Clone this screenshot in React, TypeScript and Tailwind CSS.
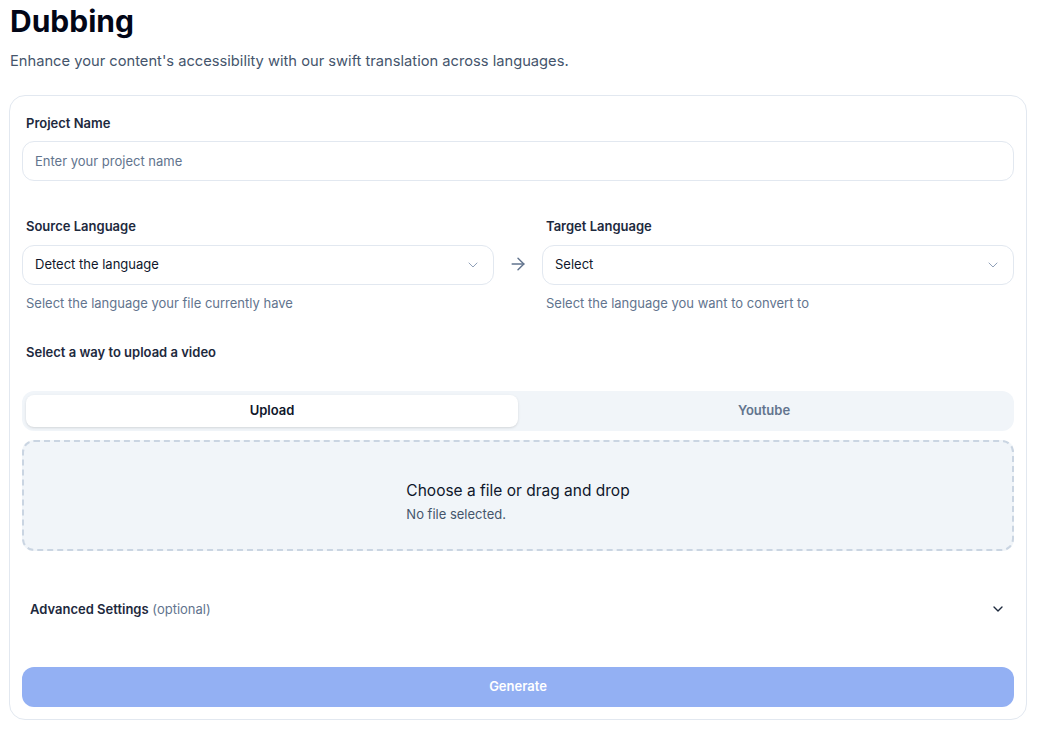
import { ChevronDown, ArrowRight } from 'lucide-react';

const font = { fontFamily: 'Inter, "Noto Sans", sans-serif' };

export default function App() {
  return (
    <div className="min-h-screen bg-white px-[9px] pt-[2px] text-slate-900" style={font}>
      <h1 className="pl-px text-[30px] font-bold leading-[38px] text-[#020617]">Dubbing</h1>
      <p className="mt-[10px] pl-px text-[14.7px] leading-[22px] text-slate-600">
        Enhance your content's accessibility with our swift translation across languages.
      </p>

      <div className="mt-[23px] mr-[3px] rounded-2xl border border-slate-200 px-[12px] pt-[17px] pb-[12px]">
        {/* Project name */}
        <label className="block pl-1 text-[13px] font-semibold leading-5 text-slate-800">Project Name</label>
        <input
          className="mt-[8px] h-10 w-full rounded-xl border border-slate-200 px-3 text-[13px] text-slate-800 placeholder-slate-500 outline-none"
          placeholder="Enter your project name"
        />

        {/* Languages */}
        <div className="mt-[35px] flex items-start gap-[14px]">
          <div className="flex-1">
            <div className="pl-1 text-[13px] font-semibold leading-5 text-slate-800">Source Language</div>
            <button className="mt-[9px] flex h-10 w-full items-center justify-between rounded-xl border border-slate-200 px-3 text-[13px] text-slate-900">
              <span>Detect the language</span>
              <ChevronDown className="h-4 w-4 text-slate-400" strokeWidth={1.5} />
            </button>
            <div className="mt-[8px] pl-1 text-[13px] leading-5 text-slate-500">Select the language your file currently have</div>
          </div>
          <div className="pt-[38px]">
            <ArrowRight className="h-5 w-5 text-slate-500" strokeWidth={1.75} />
          </div>
          <div className="flex-1">
            <div className="pl-1 text-[13px] font-semibold leading-5 text-slate-800">Target Language</div>
            <button className="mt-[9px] flex h-10 w-full items-center justify-between rounded-xl border border-slate-200 px-3 text-[13px] text-slate-900">
              <span>Select</span>
              <ChevronDown className="h-4 w-4 text-slate-400" strokeWidth={1.5} />
            </button>
            <div className="mt-[8px] pl-1 text-[13px] leading-5 text-slate-500">Select the language you want to convert to</div>
          </div>
        </div>

        {/* Upload */}
        <div className="mt-[29px] pl-1 text-[13px] font-semibold leading-5 text-slate-800">Select a way to upload a video</div>
        <div className="mt-[29px] flex h-10 w-full rounded-xl bg-slate-100 p-1">
          <div className="flex flex-1 items-center justify-center rounded-lg bg-white text-[13px] font-semibold text-slate-900 shadow-sm">Upload</div>
          <div className="flex flex-1 items-center justify-center text-[13px] font-semibold text-slate-500">Youtube</div>
        </div>
        <div className="mt-[9px] flex h-[111px] w-full items-center justify-center rounded-xl border-2 border-dashed border-slate-300 bg-slate-100">
          <div className="pt-[11px]">
            <div className="text-[15.5px] leading-6 text-slate-900">Choose a file or drag and drop</div>
            <div className="mt-[1px] text-[13px] leading-5 text-slate-600">No file selected.</div>
          </div>
        </div>

        {/* Advanced */}
        <div className="mt-[48px] flex items-center justify-between px-2">
          <div className="text-[13px] leading-5">
            <span className="font-semibold text-slate-800">Advanced Settings</span>{' '}
            <span className="text-slate-500">(optional)</span>
          </div>
          <ChevronDown className="h-4 w-4 text-slate-800" strokeWidth={2} />
        </div>

        <button className="mt-[48px] h-10 w-full rounded-xl bg-[#93b0f3] text-[13px] font-semibold text-white">
          Generate
        </button>
      </div>
    </div>
  );
}
